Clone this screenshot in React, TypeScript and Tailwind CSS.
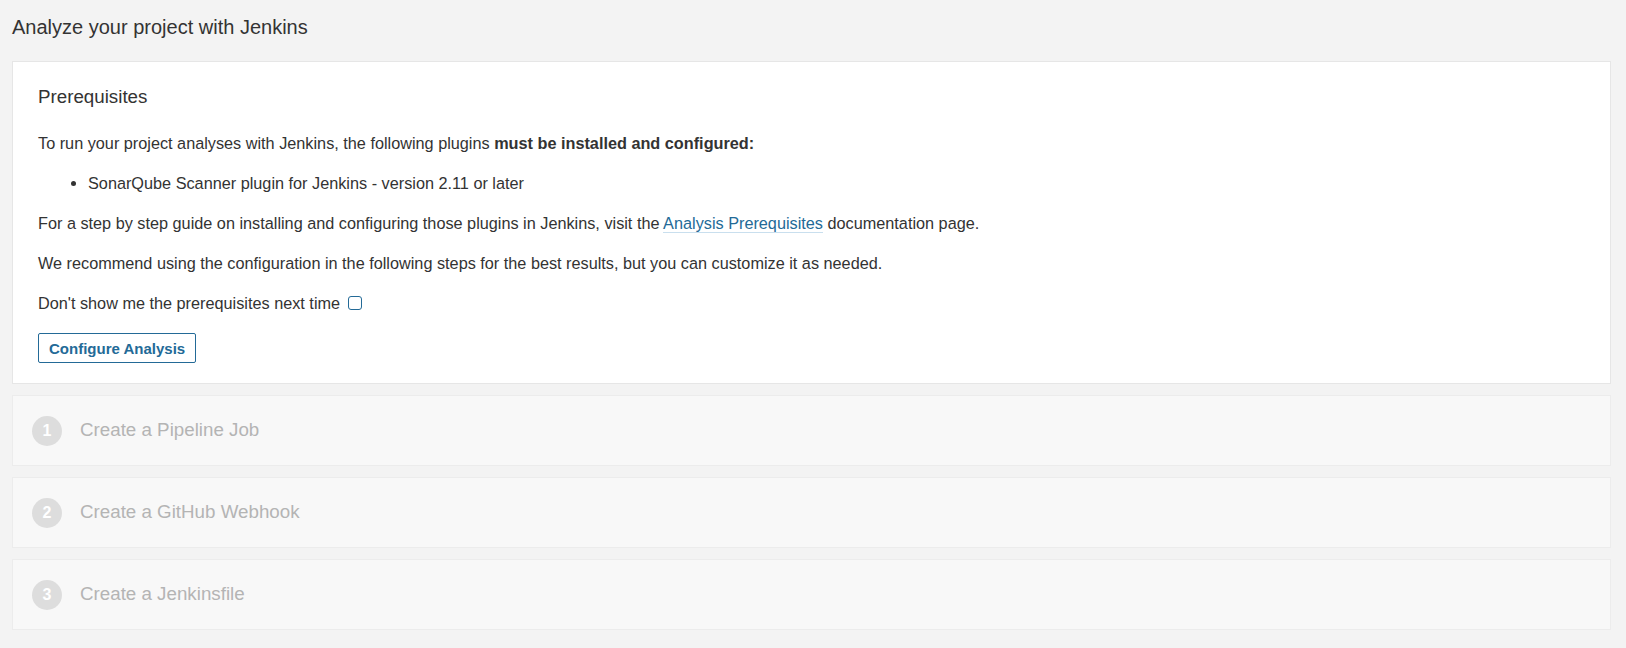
import React from 'react';

const steps = [
  { n: 1, title: 'Create a Pipeline Job' },
  { n: 2, title: 'Create a GitHub Webhook' },
  { n: 3, title: 'Create a Jenkinsfile' },
];

export default function App() {
  return (
    <div
      className="min-h-[648px] bg-[#f3f3f3] pl-[12px] pr-[15px] pt-[15px] text-[#333]"
      style={{ fontFamily: '"Liberation Sans", Arial, sans-serif' }}
    >
      {/* Page title */}
      <h1 className="text-[20px] leading-[24px] font-normal text-[#333] mb-[22px]">
        Analyze your project with Jenkins
      </h1>

      <div className="flex flex-col gap-[11px]">
        {/* Prerequisites card */}
        <div className="bg-white border border-[#e6e6e6] pl-[25px] pr-[25px] pt-[23px] pb-[20px]">
          <h3 className="text-[18.75px] leading-[24px] font-normal mb-[22px]">Prerequisites</h3>
          <p className="text-[16.25px] leading-[24px] mb-[16px]">
            To run your project analyses with Jenkins, the following plugins{' '}
            <strong className="font-bold">must be installed and configured:</strong>
          </p>
          <ul className="list-disc pl-[50px] text-[16.25px] leading-[24px] mb-[16px]">
            <li>SonarQube Scanner plugin for Jenkins - version 2.11 or later</li>
          </ul>
          <p className="text-[16.25px] leading-[24px] mb-[16px]">
            For a step by step guide on installing and configuring those plugins in Jenkins, visit the{' '}
            <a href="#" className="text-[#236a97] border-b border-[#c9dfee]">
              Analysis Prerequisites
            </a>{' '}
            documentation page.
          </p>
          <p className="text-[16.25px] leading-[24px] mb-[16px]">
            We recommend using the configuration in the following steps for the best results, but you can customize it as needed.
          </p>
          <label className="flex items-center gap-[8px] text-[16.25px] leading-[24px] mb-[18px]">
            <span>Don't show me the prerequisites next time</span>
            <span className="inline-block w-[14px] h-[14px] border border-[#236a97] rounded-[3px] bg-white" />
          </label>
          <button className="h-[30px] px-[10px] border border-[#236a97] rounded-[2px] bg-white text-[#236a97] text-[15px] font-bold leading-none">
            Configure Analysis
          </button>
        </div>

        {/* Steps */}
        {steps.map((s) => (
          <div
            key={s.n}
            className="h-[71px] flex items-center bg-[#f8f8f8] border border-[#ececec] pl-[19px]"
          >
            <div className="w-[30px] h-[30px] rounded-full bg-[#dddddd] text-white text-[16px] font-bold flex items-center justify-center">
              {s.n}
            </div>
            <div className="ml-[18px] text-[18.75px] text-[#b4b4b4]">{s.title}</div>
          </div>
        ))}
      </div>
    </div>
  );
}
